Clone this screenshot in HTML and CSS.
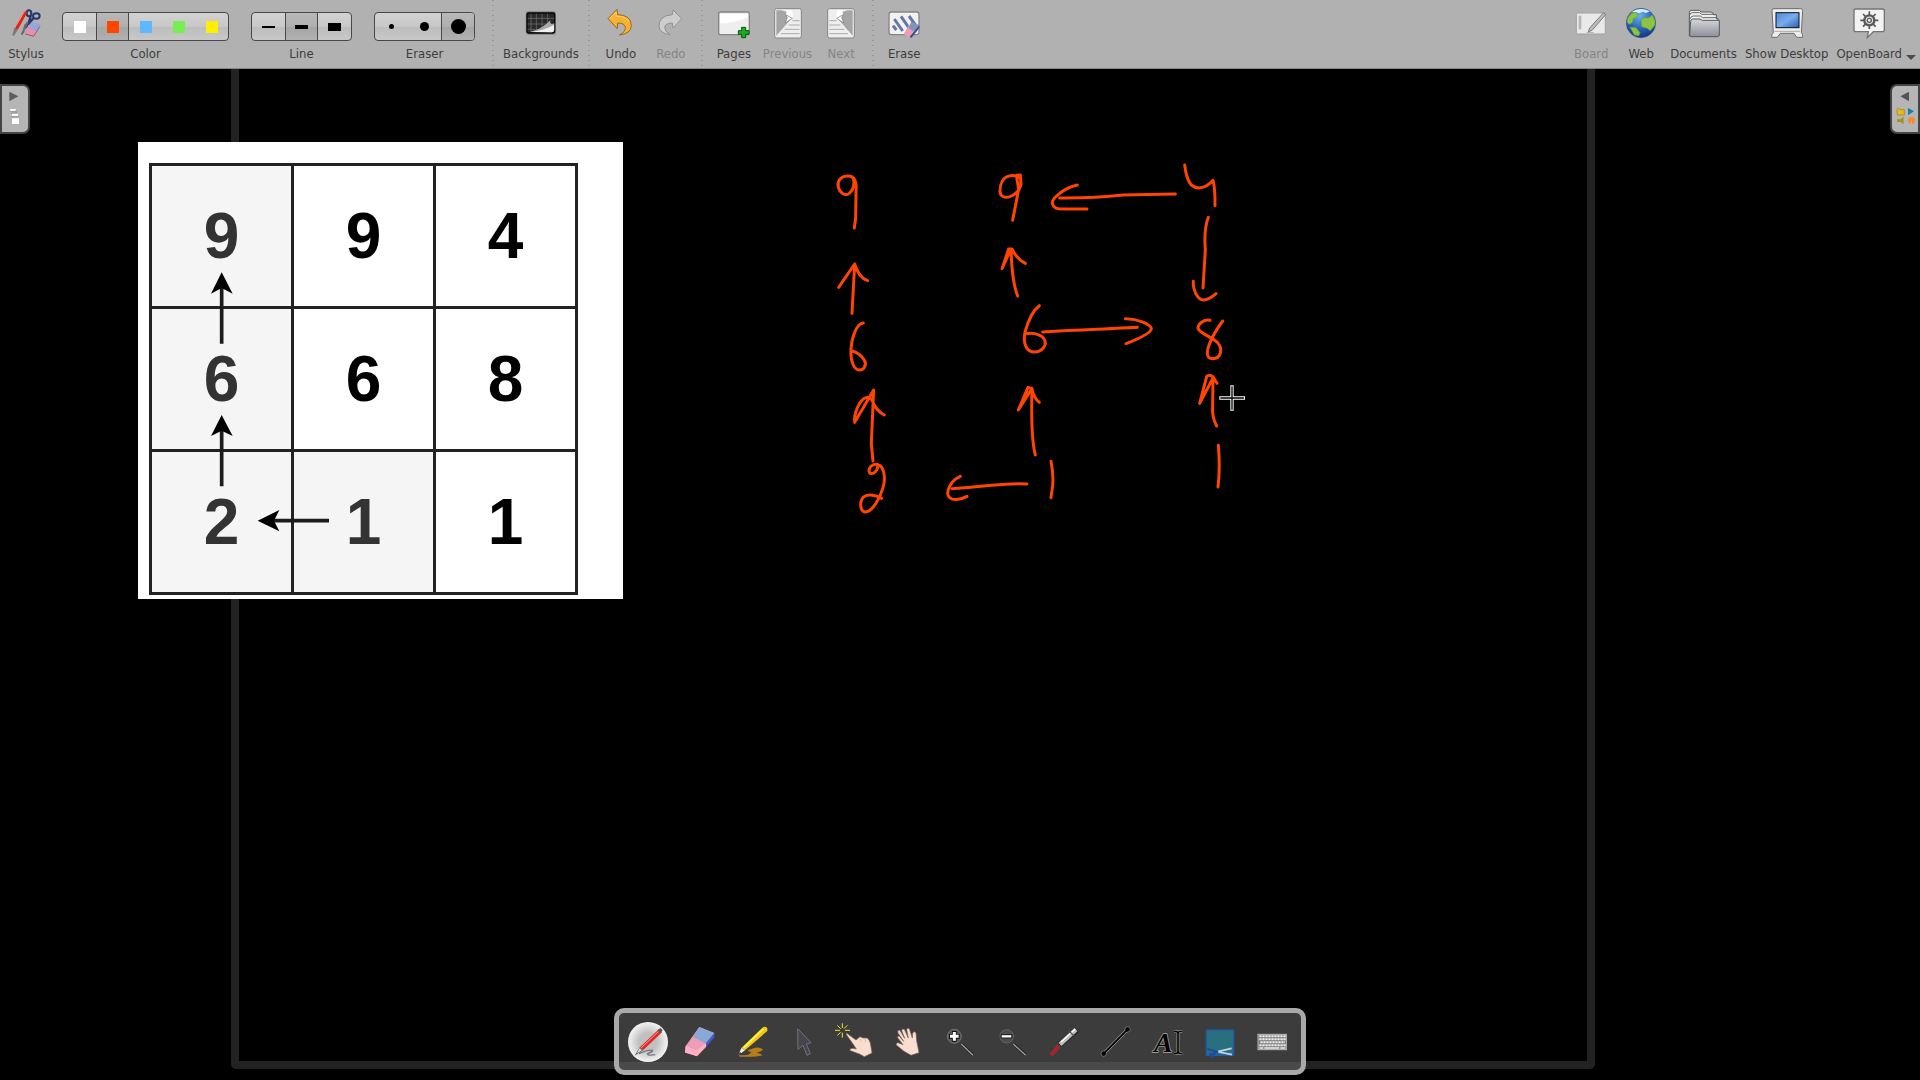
FILE: index.html
```html
<!DOCTYPE html>
<html lang="en">
<head>
<meta charset="utf-8">
<title>OpenBoard</title>
<link rel="stylesheet" href="styles.css">
</head>
<body>
<header class="toolbar">
  <button class="tool" type="button">
    <svg class="icon" viewBox="27 24 96 96"><g fill="none" stroke="#24386f" stroke-width="6"><ellipse cx="84" cy="40" rx="7" ry="9"/><ellipse cx="106" cy="48" rx="10" ry="8"/><path d="M89 48 80 80M97 55 72 84" stroke-width="7"/></g><path d="M80 66 62 104M74 72 66 98" stroke="#646a70" stroke-width="6"/><path d="M70 32 79 37 50 90 40 84Z" fill="#dd2419"/><path d="M71 33 41 84" stroke="#f8a296" stroke-width="3"/><path d="M40 84 50 90 38 108 34 106Z" fill="#777"/><path d="M82 75 116 72 107 97 98 109 72 103Z" fill="#e98fab"/><path d="M93 66 118 73 108 94 84 85Z" fill="#91a8dc"/><path d="M73 102 98 109 117 79" fill="none" stroke="#985c72" stroke-width="3"/></svg>
    <span class="label">Stylus</span>
  </button>
  <div class="group">
    <div class="segments" role="group" aria-labelledby="color-label">
      <button class="seg" type="button" aria-label="White"><i class="swatch white"></i></button>
      <button class="seg selected" type="button" aria-label="Red"><i class="swatch red"></i></button>
      <button class="seg" type="button" aria-label="Blue"><i class="swatch blue"></i></button>
      <button class="seg" type="button" aria-label="Green"><i class="swatch green"></i></button>
      <button class="seg" type="button" aria-label="Yellow"><i class="swatch yellow"></i></button>
    </div>
    <span class="label" id="color-label">Color</span>
  </div>
  <div class="group">
    <div class="segments" role="group" aria-labelledby="line-label">
      <button class="seg" type="button" aria-label="Thin line"><i class="stroke thin"></i></button>
      <button class="seg selected" type="button" aria-label="Medium line"><i class="stroke medium"></i></button>
      <button class="seg" type="button" aria-label="Thick line"><i class="stroke thick"></i></button>
    </div>
    <span class="label" id="line-label">Line</span>
  </div>
  <div class="group">
    <div class="segments" role="group" aria-labelledby="eraser-label">
      <button class="seg" type="button" aria-label="Small eraser"><i class="dot small"></i></button>
      <button class="seg" type="button" aria-label="Medium eraser"><i class="dot mid"></i></button>
      <button class="seg selected" type="button" aria-label="Large eraser"><i class="dot large"></i></button>
    </div>
    <span class="label" id="eraser-label">Eraser</span>
  </div>
  <span class="divider"></span>
  <button class="tool" type="button">
    <svg class="icon" viewBox="129 24 96 96"><rect x="131" y="34" width="91" height="70" rx="7" fill="#858585"/><rect x="135" y="39" width="83" height="60" rx="5" fill="#292929" stroke="#050505" stroke-width="4"/><path d="M147 41V96M163 41V90M180 41V85M197 41V75M137 55H217M137 72H200M137 88H160" stroke="#777" stroke-width="2"/><path d="M144 95Q180 88 205 61Q202 76 217 70V90Q216 97 210 97Z" fill="#aaa"/><path d="M145 96Q188 91 216 75V90Q215 97 209 97Z" fill="#f0f0f0"/></svg>
    <span class="label">Backgrounds</span>
  </button>
  <span class="divider"></span>
  <button class="tool" type="button">
    <svg class="icon" viewBox="367 24 96 96"><path d="M376 56 403 28 405 44Q446 45 446 77Q445 101 410 105Q429 96 428 82Q426 69 405 69L404 86Z" fill="#f5b331" stroke="#99691e" stroke-width="3" stroke-linejoin="round"/><path d="M381 56 400 36 401 49Q428 47 438 65" fill="none" stroke="#ffd165" stroke-width="3"/></svg>
    <span class="label">Undo</span>
  </button>
  <button class="tool" type="button" disabled>
    <svg class="icon" viewBox="519 24 96 96"><path d="M599 56 573 30 571 44Q531 47 531 78Q532 101 565 104Q548 95 548 82Q549 70 571 69L573 84Z" fill="#cdcdcd" stroke="#919191" stroke-width="3" stroke-linejoin="round"/></svg>
    <span class="label">Redo</span>
  </button>
  <span class="divider"></span>
  <button class="tool" type="button">
    <svg class="icon" viewBox="708 24 96 96"><rect x="710" y="36" width="92" height="68" rx="6" fill="#eee" stroke="#858585" stroke-width="4"/><path d="M714 70Q760 70 798 52V42H714Z" fill="#fff"/><path d="M779 82H791V92H801V103H791V113H779V103H769V92H779Z" fill="#16ae22" stroke="#07550e" stroke-width="3"/></svg>
    <span class="label">Pages</span>
  </button>
  <button class="tool" type="button" disabled>
    <svg class="icon" viewBox="873 24 96 96"><rect x="881" y="26" width="80" height="88" rx="6" fill="#eee" stroke="#858585" stroke-width="3"/><path d="M886 31H917L914 44 932 55 886 107Z" fill="#a5a5a5"/><path d="M900 31H930Q938 38 934 55L914 44 920 36Z" fill="#fff"/><path d="M914 44 934 55 912 69 919 53Z" fill="#fff" stroke="#777" stroke-width="2"/><path d="M934 62H956M923 75H956M911 88H956M900 101H956" stroke="#8b8b8b" stroke-width="2"/></svg>
    <span class="label">Previous</span>
  </button>
  <button class="tool" type="button" disabled>
    <svg class="icon" viewBox="1038 24 96 96"><rect x="1046" y="26" width="80" height="88" rx="6" fill="#eee" stroke="#858585" stroke-width="3"/><path d="M1121 31H1090L1093 44 1075 55 1121 107Z" fill="#a5a5a5"/><path d="M1107 31H1077Q1069 38 1073 55L1093 44 1087 36Z" fill="#fff"/><path d="M1093 44 1073 55 1095 69 1088 53Z" fill="#fff" stroke="#777" stroke-width="2"/><path d="M1073 62H1051M1084 75H1051M1096 88H1051M1107 101H1051" stroke="#8b8b8b" stroke-width="2"/></svg>
    <span class="label">Next</span>
  </button>
  <span class="divider"></span>
  <button class="tool" type="button">
    <svg class="icon" viewBox="1227 24 96 96"><rect x="1230" y="36" width="90" height="68" rx="7" fill="#f2f2f2" stroke="#858585" stroke-width="4"/><path d="M1242 77 1252 90M1246 57 1271 93M1266 49 1291 85M1290 48 1313 80" stroke="#6577a4" stroke-width="9"/><path d="M1289 76 1316 88 1297 113 1274 103Z" fill="#f39ab5"/><path d="M1297 65 1321 76 1311 98 1288 84Z" fill="#8394ba"/><path d="M1321 76V84L1297 114 1292 110" fill="#384d91"/></svg>
    <span class="label">Erase</span>
  </button>
  <span class="spacer"></span>
  <button class="tool" type="button" disabled>
    <svg class="icon" viewBox="99 24 96 96"><rect x="103" y="39" width="87" height="63" rx="4" fill="#e9e9e9" stroke="#a0a0a0" stroke-width="3"/><path d="M114 47V88" stroke="#b5b5b5" stroke-width="8"/><path d="M185 38 191 44 151 90 139 96 143 84Z" fill="#bcbcbc" stroke="#7d7d7d" stroke-width="3"/><path d="M134 98H155" stroke="#aaa" stroke-width="3"/></svg>
    <span class="label">Board</span>
  </button>
  <button class="tool" type="button">
    <svg class="icon" viewBox="252 24 96 96"><defs><radialGradient id="sea" cx=".45" cy=".25" r=".8"><stop offset="0" stop-color="#69b2ed"/><stop offset=".55" stop-color="#2762bd"/><stop offset="1" stop-color="#102f7c"/></radialGradient></defs><circle cx="300" cy="69" r="44" fill="url(#sea)" stroke="#304e87" stroke-width="2"/><path d="M260 55Q268 39 283 36L292 45 284 54 277 56 275 67 265 73 258 67ZM300 60 310 53 322 54 334 45 342 61 342 76 328 92 318 85 302 80ZM267 81 285 83 297 98 294 107 280 105Z" fill="#8cc342" stroke="#679b32" stroke-width="2"/><path d="M272 35Q298 19 326 34L315 39 305 35 294 40 285 36Z" fill="#d7efff"/></svg>
    <span class="label">Web</span>
  </button>
  <button class="tool" type="button">
    <svg class="icon" viewBox="440 24 96 96"><defs><linearGradient id="folder" x2="0" y2="1"><stop stop-color="#d5d7dc"/><stop offset="1" stop-color="#8c8f96"/></linearGradient></defs><path d="M444 108V38Q444 31 451 31H474L479 36H508Q516 36 516 44H525V56H530V108Z" fill="#eee" stroke="#545454" stroke-width="3"/><path d="M445 46Q446 38 453 38H475L481 43H516M446 57Q449 48 456 48H477L484 53H525" fill="none" stroke="#666" stroke-width="3"/><path d="M454 57H476L483 61H534V105Q534 110 528 110H450Q445 110 445 104L448 64Q449 57 454 57Z" fill="url(#folder)" stroke="#54575e" stroke-width="3"/></svg>
    <span class="label">Documents</span>
  </button>
  <button class="tool" type="button">
    <svg class="icon" viewBox="689 24 96 96"><defs><linearGradient id="screen" x2="1" y2="1"><stop stop-color="#4d87db"/><stop offset=".5" stop-color="#78acee"/><stop offset="1" stop-color="#245eb9"/></linearGradient></defs><path d="M698 26H778Q784 26 784 32L780 98Q785 102 784 112H766L758 100H717L708 112H691Q690 102 696 98L692 32Q692 26 698 26Z" fill="#ededed" stroke="#6d6d6d" stroke-width="3"/><rect x="704" y="38" width="69" height="45" fill="url(#screen)" stroke="#111" stroke-width="3"/><path d="M700 94H776" stroke="#aaa" stroke-width="3"/></svg>
    <span class="label">Show Desktop</span>
  </button>
  <button class="tool menu-tool" type="button">
    <svg class="icon" viewBox="938 24 96 96"><path d="M946 27H1027Q1032 27 1032 33V89Q1032 95 1027 95H999L981 113 984 95H946Q941 95 941 89V33Q941 27 946 27Z" fill="#f3f3f3" stroke="#747474" stroke-width="4"/><g stroke="#585858" fill="none"><path d="M987 34V87M960 61H1014M968 42 1006 80M1006 42 968 80" stroke-width="5"/><circle cx="987" cy="61" r="15" fill="#ddd" stroke-width="7"/><circle cx="987" cy="61" r="6" fill="#fff" stroke-width="4"/></g></svg>
    <span class="label">OpenBoard</span>
    <i class="caret"></i>
  </button>
</header>

<main class="canvas">
  <div class="page-frame"></div>
  <div class="picture">
    <table class="matrix">
      <tr><td class="path">9</td><td>9</td><td>4</td></tr>
      <tr><td class="path">6</td><td>6</td><td>8</td></tr>
      <tr><td class="path">2</td><td class="path">1</td><td>1</td></tr>
    </table>
    <svg class="arrows" viewBox="54 36 1455 1371"><g stroke="#1c1c1c" stroke-width="11"><path d="M305 641V470M305 1069V900M627 1172H460"/></g><path d="M305 427 338 491 305 474 273 491ZM305 855 338 918 305 902 273 918ZM413 1172 478 1140 462 1172 478 1204Z"/></svg>
  </div>

  <svg class="ink" viewBox="0 0 1410 1140" role="img" aria-label="Handwritten grid of numbers with arrows">
    <path d="M163 92Q160 76 141 78C119 80 111 96 115 111C119 129 137 141 149 129C160 119 164 101 160 84Q171 93 168 130L167 204 163 234"/>
    <path d="M653 84Q650 75 631 77C608 80 600 103 600 124C601 139 613 145 630 140C647 134 659 119 663 103L661 75 649 76 656 118 638 211"/>
    <path d="M156 490 164 342 116 412M164 342Q177 384 203 392"/>
    <path d="M653 438Q636 397 633 297L606 356 626 297 636 297Q650 327 676 340"/>
    <path d="M190 519C170 520 155 562 153 597C151 638 164 661 179 660C194 660 201 642 192 629C185 618 170 607 157 603"/>
    <path d="M718 467C700 480 684 514 675 546C668 583 680 607 705 606C726 605 739 588 735 573C731 557 707 547 678 551"/>
    <path d="M219 933 214 881 221 720 164 817C161 794 177 748 200 742Q214 740 221 762 231 783 253 795"/>
    <path d="M706 915Q692 863 696 715L655 780 684 712 695 715Q703 747 718 757"/>
    <path d="M231 943C216 941 204 955 208 967C215 978 234 964 234 944C252 948 258 984 249 1013C240 1045 217 1087 194 1086C179 1082 178 1052 192 1040C207 1030 231 1037 245 1045"/>
    <path d="M681 1002Q641 999 575 1006T456 1016M481 979C454 990 438 1021 445 1038C455 1054 481 1050 501 1039M753 934Q761 975 758 1007L753 1043"/>
    <path d="M1126 132Q1038 133 969 135 882 145 779 144M832 105C790 114 750 149 758 163Q762 179 795 177H861"/>
    <path d="M1154 45Q1159 88 1174 105C1194 122 1221 112 1239 91Q1246 118 1245 167"/>
    <path d="M1225 202Q1211 239 1216 300L1209 414M1180 394C1178 416 1190 447 1209 450Q1225 451 1248 431"/>
    <path d="M728 546Q800 542 891 538T1012 532M976 506C1015 505 1052 525 1054 535Q1055 551 978 581"/>
    <path d="M1230 511C1211 507 1194 523 1194 534C1196 549 1231 558 1253 578C1270 599 1262 626 1238 626C1218 626 1219 605 1229 580Q1242 548 1268 513"/>
    <path d="M1250 828Q1235 801 1238 767L1239 684 1199 760 1220 680Q1226 671 1239 680L1251 700M1255 886Q1261 951 1254 1011"/>
    <path class="cursor-edge" d="M1296 706V782M1258 744H1335"/>
    <path class="cursor-core" d="M1296 709V779M1261 744H1332"/>
  </svg>

  <button class="tab tab-left" type="button" aria-label="Open page list">
    <svg viewBox="0 252 90 150"><path d="M28 275 55 289 28 304Z" fill="#5d5d5d"/><path d="M30 327H47V333H30ZM32 341H54V348H32ZM36 355H57V372H36Z" fill="#fff"/><path d="M29 334H49V339H34V350H56" fill="none" stroke="#888" stroke-width="2"/></svg>
  </button>
  <button class="tab tab-right" type="button" aria-label="Open library">
    <svg viewBox="1050 252 90 150"><path d="M1107 275 1081 289 1107 304Z" fill="#555"/><path d="M1071 328 1075 325 1082 329H1093V345H1072Z" fill="#e7b91c" stroke="#a37e12" stroke-width="2"/><path d="M1104 324 1122 334 1104 346Z" fill="#167bad"/><path d="M1091 350V373L1081 366H1071V358H1081Z" fill="#a39323"/><path d="M1107 353 1114 350 1122 353 1125 361 1121 371H1116V364H1112V371H1107L1104 361Z" fill="#f68b28"/></svg>
  </button>

  <nav class="dock" aria-label="Drawing tools">
    <button class="dock-tool" type="button" aria-label="Pen"><svg viewBox="84 63 120 120"><defs><radialGradient id="knob"><stop offset=".45" stop-color="#c0c0c0"/><stop offset="1" stop-color="#f4f4f4"/></radialGradient></defs><circle cx="144" cy="123" r="60" fill="url(#knob)"/><path d="M117 158Q145 145 157 148 161 151 143 158 141 165 166 161" fill="none" stroke="#777" stroke-width="4"/><path d="M174 87 186 94 130 147 118 140Z" fill="#e02a2a"/><path d="M176 91 123 141" stroke="#ff9b94" stroke-width="3"/><path d="M172 87 182 81 188 88 181 97ZM118 140 130 147 104 164Z" fill="#555"/><path d="M118 142 126 147 110 158Z" fill="#ddd"/></svg></button>
    <button class="dock-tool" type="button" aria-label="Eraser"><svg viewBox="240 63 120 120"><path d="M298 78 342 96 290 165 255 155 257 135Z" fill="#ed9db5"/><path d="M298 78 343 96 319 129 278 107Z" fill="#8ba7d5"/><path d="M343 96V109L318 139V126Z" fill="#405bd1"/><path d="M257 135 290 148 318 127V138L291 166 255 154Z" fill="#ffb0c3"/></svg></button>
    <button class="dock-tool" type="button" aria-label="Highlighter"><svg viewBox="396 63 120 120"><path d="M418 162Q447 166 454 153 432 149 456 143 477 135 489 146 486 151 469 155 484 157 487 163 465 169 418 167Z" fill="#b67d18"/><path d="M489 79Q496 75 502 82V90L435 148 424 141Z" fill="#f1c719"/><path d="M490 83 431 140" stroke="#ffee47" stroke-width="6"/><path d="M424 141 435 148 415 163Z" fill="#eee"/><path d="M420 153 424 157 415 163Z" fill="#222"/></svg></button>
    <button class="dock-tool" type="button" aria-label="Select"><svg viewBox="552 63 120 120"><path d="M593 83 633 125 619 129 631 158 621 163 609 133 594 145Z" fill="#45454e" stroke="#74747b" stroke-width="3"/></svg></button>
    <button class="dock-tool" type="button" aria-label="Interact"><svg viewBox="708 63 120 120"><g stroke="#eee43a" stroke-width="3"><path d="M727 67V81M727 95V110M705 88H720M735 88H750M712 73 722 83M742 73 732 83M712 103 722 94"/></g><path d="M738 99Q741 95 746 101L768 117 780 107 789 111 802 111 808 119 811 126 816 156 793 167Q779 158 764 154L749 148Q750 141 759 142L769 144 759 129Z" fill="#f9ded0" stroke="#766259" stroke-width="2"/><path d="M780 114 784 122M795 114 797 123" stroke="#c4a495" stroke-width="2"/></svg></button>
    <button class="dock-tool" type="button" aria-label="Scroll page"><svg viewBox="864 63 120 120"><path d="M894 96Q891 87 899 87L914 112 905 89Q906 82 913 85L925 111 920 86Q922 79 928 83L937 111 938 96Q943 89 948 96L950 120 957 155 933 163 912 151 889 132Q887 126 894 125L909 131 893 110Q891 105 897 105L911 121Z" fill="#f9ded0" stroke="#766259" stroke-width="2"/></svg></button>
    <button class="dock-tool" type="button" aria-label="Zoom in"><svg viewBox="0 63 120 120"><circle cx="43" cy="106" r="21" fill="#555" stroke="#727272" stroke-width="3"/><path d="M65 129 99 162" stroke="#202020" stroke-width="9"/><path d="M64 129 99 163" stroke="#a0a0a0" stroke-width="4"/><path d="M43 90V122M27 106H59" stroke="#111" stroke-width="14"/><path d="M43 93V119M30 106H56" stroke="#fff" stroke-width="9"/></svg></button>
    <button class="dock-tool" type="button" aria-label="Zoom out"><svg viewBox="156 63 120 120"><circle cx="200" cy="106" r="20" fill="#4c4c4c" stroke="#666" stroke-width="3"/><path d="M221 129 257 162" stroke="#202020" stroke-width="9"/><path d="M220 129 257 163" stroke="#a0a0a0" stroke-width="4"/><path d="M182 106H217" stroke="#111" stroke-width="12"/><path d="M185 106H214" stroke="#fff" stroke-width="7"/></svg></button>
    <button class="dock-tool" type="button" aria-label="Laser pointer"><svg viewBox="312 63 120 120"><path d="M357 135 333 163" stroke="#9f2929" stroke-width="13"/><path d="M411 86 359 131" stroke="#252525" stroke-width="18"/><path d="M408 86 360 130" stroke="#bdbdbd" stroke-width="13"/><path d="M406 84 363 123" stroke="#fff" stroke-width="4"/><path d="M388 91 402 105" stroke="#555" stroke-width="4"/></svg></button>
    <button class="dock-tool" type="button" aria-label="Line"><svg viewBox="468 63 120 120"><path d="M491 158 563 85" stroke="#aaa" stroke-width="9"/><g stroke="#999" stroke-width="2"><circle cx="491" cy="158" r="8"/><circle cx="563" cy="85" r="8"/></g><path d="M491 158 563 85" stroke="#000" stroke-width="6"/></svg></button>
    <button class="dock-tool" type="button" aria-label="Text"><svg viewBox="624 63 120 120"><text class="glyph" x="642" y="154">A</text><path d="M702 91Q713 90 714 97 715 90 727 91M714 95V154M702 158Q713 159 714 152 715 159 727 158" fill="none" stroke="#bbb" stroke-width="8"/><path d="M702 91Q713 90 714 97 715 90 727 91M714 95V154M702 158Q713 159 714 152 715 159 727 158" fill="none" stroke="#000" stroke-width="5"/></svg></button>
    <button class="dock-tool" type="button" aria-label="Capture"><svg viewBox="780 63 120 120"><rect x="799" y="87" width="82" height="76" fill="#287080" stroke="#2159aa" stroke-width="4"/><path d="M833 152 875 142M836 153 876 161" stroke="#c6d5df" stroke-width="5"/><path d="M802 144 834 153M808 164 834 152" stroke="#204b9b" stroke-width="6"/><circle cx="815" cy="163" r="6" fill="none" stroke="#204b9b" stroke-width="4"/></svg></button>
    <button class="dock-tool" type="button" aria-label="Virtual keyboard"><svg viewBox="936 63 120 120"><rect x="954" y="100" width="85" height="46" fill="#777" stroke="#bbb" stroke-width="3"/><g stroke="#eee" stroke-width="6" stroke-dasharray="7 2"><path d="M958 106H1037M958 115H1037M961 124H1035M958 133H1037"/></g><path d="M958 141H970M973 141H1018M1021 141H1036" stroke="#eee" stroke-width="5"/></svg></button>
  </nav>
</main>
</body>
</html>
```
FILE: styles.css
```css
* { box-sizing: border-box; }

body {
  margin: 0;
  min-height: 100vh;
  display: flex;
  flex-direction: column;
  background: #000;
  color: #3d3d3d;
  font: 13px/16px "DejaVu Sans Condensed", "DejaVu Sans", sans-serif;
  overflow: hidden;
}

button {
  margin: 0;
  padding: 0;
  border: 0;
  background: none;
  color: inherit;
  font: inherit;
}

.toolbar {
  display: flex;
  align-items: stretch;
  height: 69px;
  padding: 0 14px 0 1px;
  background: #b1b1b1;
  border-bottom: 1px solid #858585;
}

.tool, .group {
  display: flex;
  flex-direction: column;
  align-items: center;
  flex: none;
}

.tool {
  min-width: 50px;
  padding: 8px 4px 0;
  gap: 6px;
  position: relative;
}

.tool:disabled { color: #858585; }
.icon { width: 32px; height: 32px; }
.label { white-space: nowrap; }

.group { padding: 12px 11px 0; gap: 5px; }

.segments {
  display: flex;
  height: 29px;
  border: 1px solid #484848;
  border-radius: 4px;
  background: linear-gradient(#d2d2d2, #c8c8c8 50%, #bdbdbd 51%, #c8c8c8);
  overflow: hidden;
}

.seg {
  width: 33px;
  display: flex;
  align-items: center;
  justify-content: center;
}

.seg.selected {
  border: solid #484848;
  border-width: 0 1px;
  background: linear-gradient(#b8b8b8, #afafaf 50%, #a5a5a5 51%, #b1b1b1);
}

.seg.selected:last-child { border-right: 0; }

.swatch { width: 12px; height: 12px; }
.white { background: #fff; }
.red { background: #ff4500; }
.blue { background: #5fb8ff; }
.green { background: #77ef52; }
.yellow { background: #ffee00; }

.stroke { width: 13px; background: #000; }
.thin { height: 2px; }
.medium { height: 4px; }
.thick { height: 8px; }

.dot { border-radius: 50%; background: #000; }
.small { width: 5px; height: 5px; }
.mid { width: 9px; height: 9px; }
.large { width: 15px; height: 15px; }

.divider {
  width: 13px;
  flex: none;
  background: repeating-linear-gradient(#989898 0 1px, transparent 1px 5px) center / 2px 100% no-repeat;
}

.spacer { flex: 1; }

.caret {
  position: absolute;
  right: -10px;
  bottom: 8px;
  border: solid transparent;
  border-width: 5px 5px 0;
  border-top-color: #4c4c4c;
}

.canvas {
  position: relative;
  flex: 1;
  overflow: hidden;
}

.page-frame {
  position: absolute;
  top: -12px;
  right: 325px;
  bottom: 11px;
  left: 231px;
  border: 8px solid #222;
  border-radius: 5px;
}

.picture {
  position: absolute;
  top: 73px;
  left: 138px;
  width: 485px;
  height: 457px;
  padding: 21px 11px;
  background: #fff;
}

.matrix {
  border-collapse: collapse;
  color: #000;
  font: bold 64px/64px "Liberation Sans", Arial, sans-serif;
}

.matrix td {
  width: 142px;
  height: 143px;
  padding: 0;
  border: 3px solid #222;
  text-align: center;
}

.matrix .path { background: #f5f5f5; color: #333; }

.arrows {
  position: absolute;
  inset: 0;
  width: 100%;
  height: 100%;
}

.ink {
  position: absolute;
  top: 81px;
  left: 800px;
  width: 470px;
  height: 380px;
  fill: none;
  stroke: #ff4500;
  stroke-width: 9;
  stroke-linecap: round;
  stroke-linejoin: round;
}

.ink .cursor-edge { stroke: #fff; stroke-width: 10; stroke-linecap: butt; }
.ink .cursor-core { stroke: #000; stroke-width: 4; stroke-linecap: butt; }

.tab {
  position: absolute;
  top: 15px;
  width: 30px;
  height: 50px;
  border: 2px solid #444;
  background: #b5b5b5;
}

.tab svg { position: absolute; inset: -2px; width: 30px; height: 50px; }
.tab-left { left: 0; border-radius: 0 7px 7px 0; }
.tab-right { right: 0; border-radius: 7px 0 0 7px; }

.dock {
  position: absolute;
  bottom: 5px;
  left: 50%;
  transform: translateX(-50%);
  display: flex;
  height: 67px;
  padding: 0 3px;
  border: 5px solid #a9a9a9;
  border-radius: 10px;
  background: linear-gradient(to top, #4a4a4a 8px, #3c3c3c 8px);
}

.dock-tool {
  width: 52px;
  display: flex;
  align-items: center;
  justify-content: center;
}

.dock-tool svg { width: 40px; height: 40px; overflow: visible; }

.glyph {
  font: italic bold 84px "Liberation Serif", serif;
  fill: #000;
  stroke: #aaa;
  stroke-width: 4px;
  paint-order: stroke;
}
```
